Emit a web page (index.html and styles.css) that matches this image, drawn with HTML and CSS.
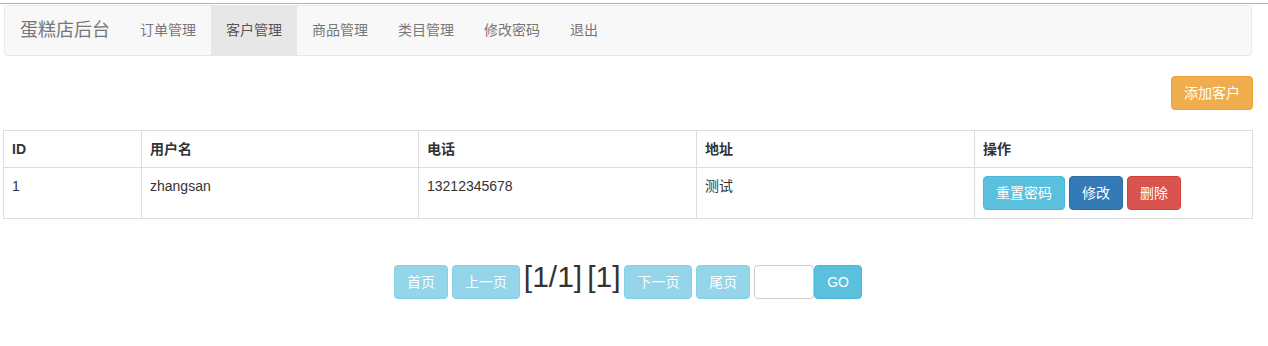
FILE: index.html
```html
<!DOCTYPE html>
<html lang="zh-CN">
<head>
<meta charset="utf-8">
<title>客户管理</title>
<link rel="stylesheet" href="styles.css">
</head>
<body>
<div class="frame">
  <nav class="navbar">
    <a class="brand" href="#">蛋糕店后台</a>
    <ul class="nav">
      <li><a href="#">订单管理</a></li>
      <li class="active"><a href="#">客户管理</a></li>
      <li><a href="#">商品管理</a></li>
      <li><a href="#">类目管理</a></li>
      <li><a href="#">修改密码</a></li>
      <li><a href="#">退出</a></li>
    </ul>
  </nav>
  <div class="toolbar">
    <a class="btn btn-warning" href="#">添加客户</a>
  </div>
  <table class="table">
    <colgroup>
      <col class="c-id"><col class="c-name"><col class="c-tel"><col class="c-addr"><col class="c-op">
    </colgroup>
    <thead>
      <tr><th>ID</th><th>用户名</th><th>电话</th><th>地址</th><th>操作</th></tr>
    </thead>
    <tbody>
      <tr>
        <td>1</td>
        <td>zhangsan</td>
        <td>13212345678</td>
        <td>测试</td>
        <td class="ops">
          <a class="btn btn-info" href="#">重置密码</a>
          <a class="btn btn-primary" href="#">修改</a>
          <a class="btn btn-danger" href="#">删除</a>
        </td>
      </tr>
    </tbody>
  </table>
  <div class="pager">
    <a class="btn btn-info disabled" href="#">首页</a>
    <a class="btn btn-info disabled" href="#">上一页</a>
    <span class="pageinfo">[1/1]</span><span class="pageinfo gap">[1]</span>
    <a class="btn btn-info disabled" href="#">下一页</a>
    <a class="btn btn-info disabled" href="#">尾页</a>
    <input class="page-input" type="text"><a class="btn btn-info" href="#">GO</a>
  </div>
</div>
</body>
</html>
```
FILE: styles.css
```css
* { box-sizing: border-box; }
html, body { margin: 0; padding: 0; background: #fff; }
body {
  font-family: "Liberation Sans", "Noto Sans CJK SC", Arial, sans-serif;
  font-size: 14px;
  line-height: 20px;
  color: #333;
  padding-top: 3px;
}
a { text-decoration: none; }
.frame {
  border-top: 1px solid #b3b3b3;
  padding: 0 15px 0 3px;
}
.navbar {
  display: flex;
  align-items: stretch;
  height: 51px;
  margin: 1px 1px 20px 1px;
  background: #f8f8f8;
  border: 1px solid #e7e7e7;
  border-radius: 4px;
}
.brand {
  padding: 14px 15px 15px;
  font-size: 18px;
  line-height: 20px;
  color: #777;
}
.nav { display: flex; list-style: none; margin: 0; padding: 0; }
.nav li a {
  display: block;
  height: 100%;
  padding: 14px 15px 15px;
  line-height: 20px;
  color: #777;
}
.nav li.active a { background: #e7e7e7; color: #555; }
.toolbar {
  display: flex;
  justify-content: flex-end;
  margin: 0 0 20px 0;
}
.btn {
  display: inline-block;
  padding: 6px 12px;
  font-size: 14px;
  line-height: 20px;
  border: 1px solid transparent;
  border-radius: 4px;
  color: #fff;
  text-align: center;
  vertical-align: baseline;
  white-space: nowrap;
}
.btn-warning { background: #f0ad4e; border-color: #eea236; }
.btn-info { background: #5bc0de; border-color: #46b8da; }
.btn-primary { background: #337ab7; border-color: #2e6da4; }
.btn-danger { background: #d9534f; border-color: #d43f3a; }
.btn.disabled { opacity: .65; }
.table {
  width: 1249px;
  border-collapse: collapse;
  table-layout: fixed;
  border: 1px solid #ddd;
}
.c-id { width: 138px; }
.c-name { width: 277px; }
.c-tel { width: 278px; }
.c-addr { width: 278px; }
.c-op { width: 278px; }
.table th, .table td {
  border: 1px solid #ddd;
  padding: 8px;
  text-align: left;
  vertical-align: top;
  line-height: 20px;
}
.table th { font-weight: bold; }
.ops { font-size: 0; }
.ops .btn { font-size: 14px; margin-right: 4px; }
.pager {
  margin-top: 41px;
  text-align: center;
}
.pageinfo {
  font-size: 30px;
  line-height: 34px;
  color: #333;
}
.pageinfo.gap { margin-left: 5px; }
.page-input {
  display: inline-block;
  vertical-align: baseline;
  width: 60px;
  height: 34px;
  border: 1px solid #ccc;
  border-radius: 4px;
  margin: 0;
  padding: 0 6px;
  font-family: inherit;
  font-size: 14px;
}
```
